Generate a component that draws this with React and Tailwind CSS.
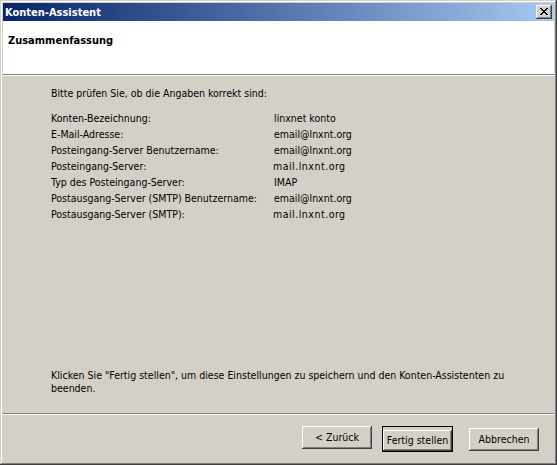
import React from "react";

const rows = [
  { label: "Konten-Bezeichnung:", value: "linxnet konto" },
  { label: "E-Mail-Adresse:", value: "email@lnxnt.org" },
  { label: "Posteingang-Server Benutzername:", value: "email@lnxnt.org" },
  { label: "Posteingang-Server:", value: "mail.lnxnt.org", alt: true },
  { label: "Typ des Posteingang-Server:", value: "IMAP" },
  { label: "Postausgang-Server (SMTP) Benutzername:", value: "email@lnxnt.org" },
  { label: "Postausgang-Server (SMTP):", value: "mail.lnxnt.org", alt: true },
];

// classic 3D raised bevel
const raised =
  "bg-[#d4d0c8] shadow-[inset_-1px_-1px_#404040,inset_1px_1px_#ffffff,inset_-2px_-2px_#808080,inset_2px_2px_#d4d0c8]";

function Button({ children, primary }) {
  if (primary) {
    return (
      <div className="border border-black">
        <button
          type="button"
          className={`${raised} w-[69px] h-[21px] text-[10.5px] leading-[13px] text-black whitespace-nowrap`}
        >
          {children}
        </button>
      </div>
    );
  }
  return (
    <button
      type="button"
      className={`${raised} w-[70px] h-[23px] text-[10.5px] leading-[13px] text-black whitespace-nowrap`}
    >
      {children}
    </button>
  );
}

export default function App() {
  return (
    <div
      className="w-[557px] h-[465px] p-[3px] bg-[#d4d0c8] flex flex-col shadow-[inset_-1px_-1px_#404040,inset_1px_1px_#d4d0c8,inset_-2px_-2px_#808080,inset_2px_2px_#ffffff]"
      style={{ fontFamily: '"DejaVu Sans Condensed", "Liberation Sans", Arial, sans-serif' }}
    >
      {/* title bar */}
      <div className="h-[18px] flex items-center justify-between bg-gradient-to-r from-[#0a246a] to-[#a6caf0] pl-[2px] pr-[2px]">
        <span className="text-white font-bold text-[11px] leading-[13px]">
          Konten-Assistent
        </span>
        <button
          type="button"
          className={`${raised} w-[16px] h-[14px] flex items-center justify-center`}
        >
          <svg width="8" height="7" viewBox="0 0 8 7" className="mt-[-1px]">
            <path
              d="M0 0h2v1h-2zM6 0h2v1h-2zM1 1h2v1h-2zM5 1h2v1h-2zM2 2h4v1h-4zM3 3h2v1h-2zM2 4h4v1h-4zM1 5h2v1h-2zM5 5h2v1h-2zM0 6h2v1h-2zM6 6h2v1h-2z"
              fill="#000"
            />
          </svg>
        </button>
      </div>

      {/* header */}
      <div className="h-[53px] bg-white pl-[5px] pt-[13px]">
        <div className="font-bold text-[11px] leading-[13px] text-black">
          Zusammenfassung
        </div>
      </div>
      <div className="h-px bg-[#808080]" />
      <div className="h-px bg-white" />

      {/* body */}
      <div className="flex-1 flex flex-col pl-[48px] pt-[11px] pb-[18px] text-[10.5px] text-black">
        <div className="leading-[13px] mb-[10px]">
          Bitte prüfen Sie, ob die Angaben korrekt sind:
        </div>
        <div className="grid grid-cols-[223px_1fr] leading-[16px]">
          {rows.map((r) => (
            <React.Fragment key={r.label}>
              <div>{r.label}</div>
              <div className={r.alt ? "tracking-[0.5px] -ml-px" : ""}>
                {r.value}
              </div>
            </React.Fragment>
          ))}
        </div>
        <div className="mt-auto w-[470px] leading-[13px]">
          Klicken Sie "Fertig stellen", um diese Einstellungen zu speichern und
          den Konten-Assistenten zu beenden.
        </div>
      </div>
      <div className="h-px bg-[#808080]" />
      <div className="h-px bg-white" />

      {/* buttons */}
      <div className="h-[47px] flex items-start justify-end pt-[11px] pr-[15px]">
        <Button>&lt; Zurück</Button>
        <div className="ml-[10px]">
          <Button primary>Fertig stellen</Button>
        </div>
        <div className="ml-[16px]">
          <Button>Abbrechen</Button>
        </div>
      </div>
    </div>
  );
}
